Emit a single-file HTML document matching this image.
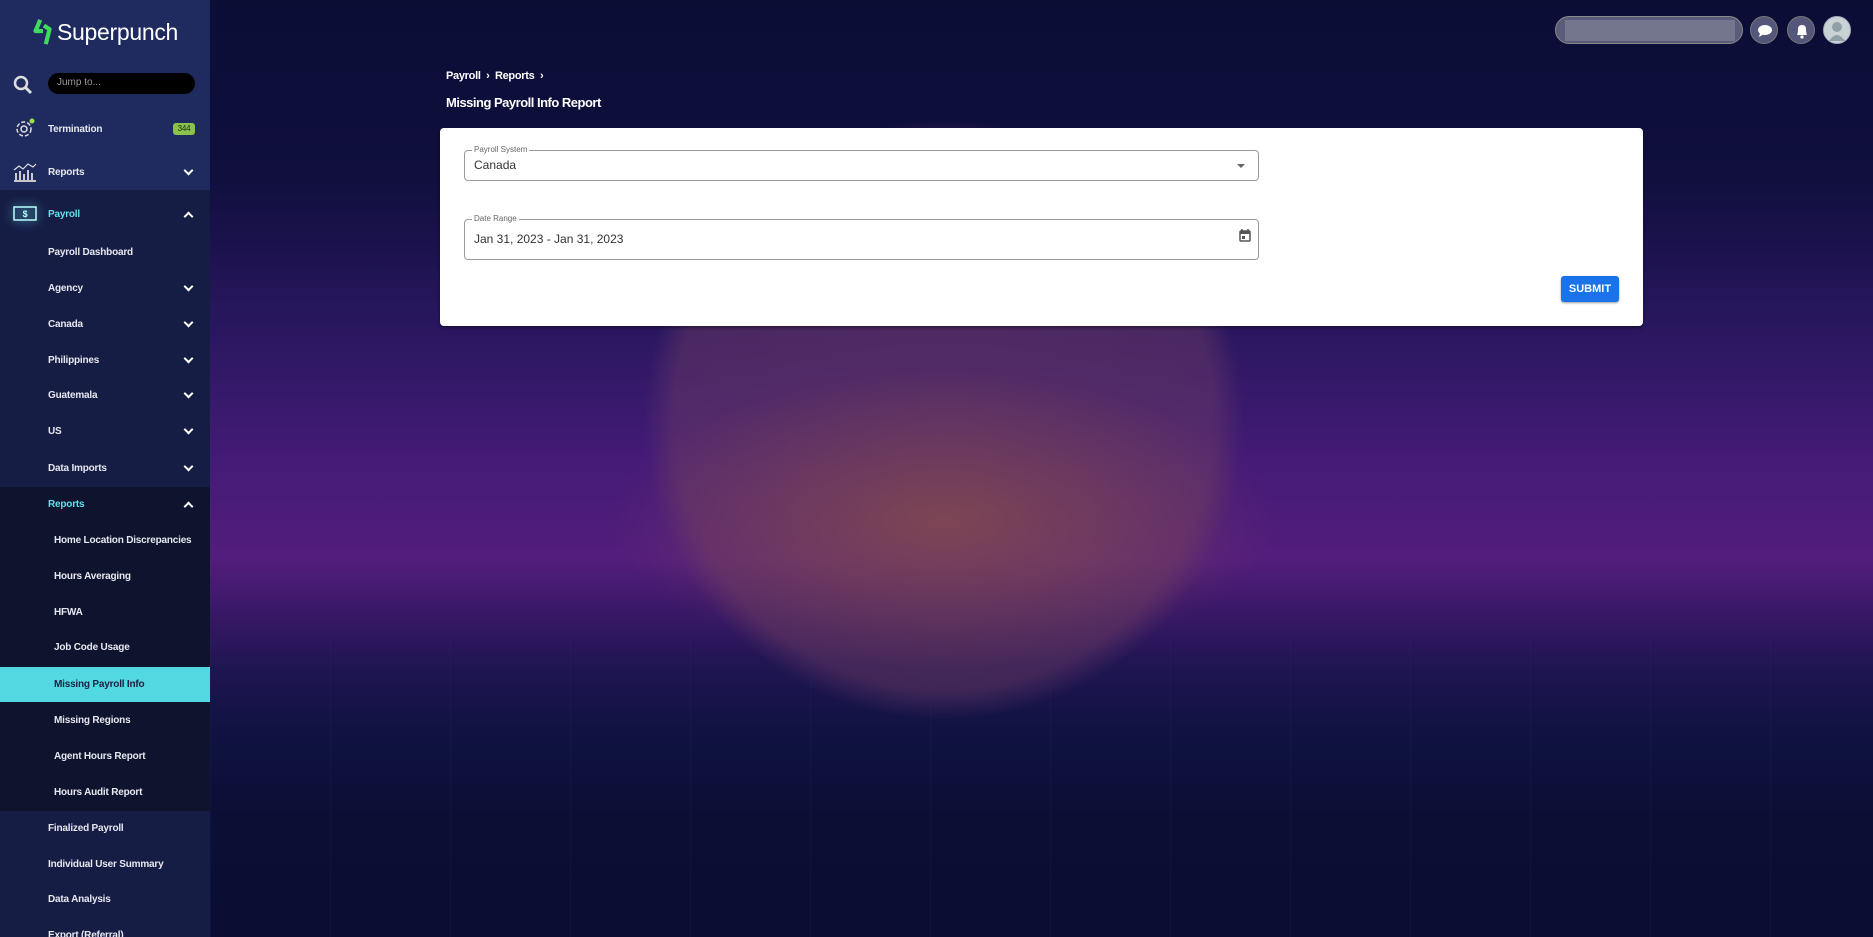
<!DOCTYPE html>
<html><head><meta charset="utf-8"><style>
*{box-sizing:border-box;margin:0;padding:0}
html,body{width:1873px;height:937px;overflow:hidden}
body{font-family:"Liberation Sans",sans-serif;background:#0b0e33;position:relative}
#bg{position:absolute;left:210px;top:0;width:1663px;height:937px;
background:
radial-gradient(ellipse 330px 150px at 734px 520px, rgba(150,90,60,.55), rgba(150,90,60,0) 100%),
radial-gradient(circle 300px at 734px 420px, rgba(110,60,100,.55) 0, rgba(110,60,100,.45) 90%, rgba(110,60,100,0) 100%),
linear-gradient(180deg,#0b0d35 0,#100f3e 180px,#2a1760 330px,#461b78 470px,#531d7c 560px,#3a1868 610px,#1e1550 670px,#0f1240 740px,#0b0f34 820px,#0b0e32 937px);}
#grid{position:absolute;left:210px;top:640px;width:1663px;height:297px;
background:repeating-linear-gradient(90deg,rgba(40,60,120,.12) 0 1px,transparent 1px 120px);}
#side{position:absolute;left:0;top:0;width:210px;height:937px;background:#1f2b5e;color:#e6e8f0;overflow:hidden}
.logo{position:absolute;left:32px;top:18px;font-size:23px;color:#fff;display:flex;align-items:center;gap:3px;letter-spacing:-.3px}
.search{position:absolute;left:48px;top:73px;width:147px;height:21px;background:#000;border-radius:11px;color:#999;font-size:10px;padding:4px 9px}
.row{position:absolute;left:0;width:210px;height:36px;display:flex;align-items:center;font-size:10px;font-weight:bold;white-space:nowrap;letter-spacing:-.2px}
.row span{position:absolute;left:48px}
.row.s span{left:54px}
.chev{position:absolute;right:18px;top:13px;width:7px;height:7px;border-right:2px solid #fff;border-bottom:2px solid #fff;transform:rotate(45deg)}
.chev.up{transform:rotate(-135deg);top:17px}
.icon{position:absolute;left:13px}
.crumb{position:absolute;left:446px;top:70px;color:#fff;font-size:11px;font-weight:bold;letter-spacing:-.3px}
.title{position:absolute;left:446px;top:95px;color:#fff;font-size:13px;font-weight:bold;letter-spacing:-.5px}
.card{position:absolute;left:440px;top:128px;width:1203px;height:198px;background:#fff;border-radius:4px;box-shadow:0 2px 3px rgba(0,0,0,.4)}
.fld{position:absolute;left:24px;width:795px;border:1px solid #9a9a9a;border-radius:4px}
.fld .lb{position:absolute;left:7px;top:-6px;background:#fff;padding:0 2px;font-size:8px;color:#666}
.fld .v{position:absolute;left:9px;font-size:12px;color:#333}
.btn{position:absolute;left:1121px;top:148px;width:58px;height:26px;background:#1a73e8;color:#fff;font-size:11px;font-weight:bold;border-radius:3px;text-align:center;line-height:26px;box-shadow:0 1px 2px rgba(0,0,0,.4)}
.circ{position:absolute;top:16px;width:28px;height:28px;border-radius:50%;background:#55577a;border:1px solid #777}
</style></head><body>
<div id="bg"></div><div id="grid"></div>
<div id="side">
 <div class="logo"><svg width="22" height="28" viewBox="0 0 22 30"><path d="M8 2 L3 14 L11 14 M12 8 L18 12 L14 28" stroke="#3ddc5c" stroke-width="4.5" fill="none" stroke-linejoin="round"/></svg><span>Superpunch</span></div>
 <svg style="position:absolute;left:13px;top:75px" width="20" height="20" viewBox="0 0 20 20"><circle cx="8" cy="8" r="6" stroke="#ddd" stroke-width="2.5" fill="none"/><path d="M12.5 12.5 L18 18" stroke="#ddd" stroke-width="3"/></svg>
 <div class="search">Jump to...</div>
 <div class="row" style="top:111px"><svg class="icon" width="22" height="22" viewBox="0 0 22 22"><circle cx="11" cy="11" r="7" stroke="#ddd" stroke-width="1.5" fill="none" stroke-dasharray="4 2"/><circle cx="11" cy="11" r="3" stroke="#ddd" stroke-width="1.5" fill="none"/><circle cx="19" cy="3" r="2.5" fill="#9be24a"/></svg><span>Termination</span><div style="position:absolute;left:173px;top:12px;width:22px;height:12px;background:#8bc34a;border-radius:3px;color:#1a2a10;font-size:8px;text-align:center;line-height:12px;font-weight:normal">344</div></div>
 <div class="row" style="top:154px"><svg class="icon" width="24" height="20" viewBox="0 0 24 20"><path d="M1 8 L6 4 L10 7 L15 2 L20 5 L23 2" stroke="#ddd" stroke-width="1.2" fill="none"/><path d="M3 18 V11 M7 18 V9 M11 18 V12 M15 18 V8 M19 18 V11 M1 19 H23" stroke="#ddd" stroke-width="1.8"/></svg><span>Reports</span><div class="chev"></div></div>
 <div style="position:absolute;top:190px;left:0;width:210px;height:297px;background:#161d45"></div>
 <div style="position:absolute;top:487px;left:0;width:210px;height:324px;background:#0f142e"></div>
 <div style="position:absolute;top:811px;left:0;width:210px;height:126px;background:#161d45"></div>
 <div style="position:absolute;top:667px;left:0;width:210px;height:35px;background:#52d8e0"></div>
 <div class="row" style="top:196px;color:#5fe0ea"><svg class="icon" width="24" height="18" viewBox="0 0 24 18" style="filter:drop-shadow(0 0 5px #5fe0ea)"><rect x="1" y="2" width="22" height="13" stroke="#bff" stroke-width="1.5" fill="none"/><text x="12" y="12" font-size="9" fill="#bff" text-anchor="middle" font-family="Liberation Sans" font-weight="bold">$</text></svg><span>Payroll</span><div class="chev up"></div></div>
 <div class="row" style="top:234px"><span>Payroll Dashboard</span></div>
 <div class="row" style="top:270px"><span>Agency</span><div class="chev"></div></div>
 <div class="row" style="top:306px"><span>Canada</span><div class="chev"></div></div>
 <div class="row" style="top:342px"><span>Philippines</span><div class="chev"></div></div>
 <div class="row" style="top:377px"><span>Guatemala</span><div class="chev"></div></div>
 <div class="row" style="top:413px"><span>US</span><div class="chev"></div></div>
 <div class="row" style="top:450px"><span>Data Imports</span><div class="chev"></div></div>
 <div class="row" style="top:486px;color:#5fe0ea"><span>Reports</span><div class="chev up"></div></div>
 <div class="row s" style="top:522px"><span>Home Location Discrepancies</span></div>
 <div class="row s" style="top:558px"><span>Hours Averaging</span></div>
 <div class="row s" style="top:594px"><span>HFWA</span></div>
 <div class="row s" style="top:629px"><span>Job Code Usage</span></div>
 <div class="row s" style="top:666px;color:#1a2040"><span>Missing Payroll Info</span></div>
 <div class="row s" style="top:702px"><span>Missing Regions</span></div>
 <div class="row s" style="top:738px"><span>Agent Hours Report</span></div>
 <div class="row s" style="top:774px"><span>Hours Audit Report</span></div>
 <div class="row" style="top:810px"><span>Finalized Payroll</span></div>
 <div class="row" style="top:846px"><span>Individual User Summary</span></div>
 <div class="row" style="top:881px"><span>Data Analysis</span></div>
 <div class="row" style="top:917px"><span>Export (Referral)</span></div>
</div>
<div class="crumb">Payroll &nbsp;›&nbsp; Reports &nbsp;›</div>
<div class="title">Missing Payroll Info Report</div>
<div class="card">
 <div class="fld" style="top:22px;height:31px"><div class="lb">Payroll System</div><div class="v" style="top:7px">Canada</div><div style="position:absolute;right:13px;top:13px;border-left:4px solid transparent;border-right:4px solid transparent;border-top:4px solid #666"></div></div>
 <div class="fld" style="top:91px;height:41px"><div class="lb">Date Range</div><div class="v" style="top:12px">Jan 31, 2023 - Jan 31, 2023</div><svg style="position:absolute;right:7px;top:9px" width="12" height="13" viewBox="0 0 12 13"><rect x="1" y="2" width="10" height="10" rx="1" fill="none" stroke="#555" stroke-width="1.5"/><rect x="1" y="2" width="10" height="3" fill="#555"/><rect x="3" y="7" width="3" height="3" fill="#555"/><path d="M3 0V3M9 0V3" stroke="#555" stroke-width="1.5"/></svg></div>
 <div class="btn">SUBMIT</div>
</div>
<div style="position:absolute;left:1555px;top:16px;width:188px;height:28px;border-radius:14px;background:#5a5b78;border:1px solid #888"><div style="position:absolute;left:9px;top:3px;width:170px;height:21px;background:#74768e"></div></div>
<div class="circ" style="left:1750px"><svg width="28" height="28" viewBox="0 0 28 28"><ellipse cx="14" cy="13" rx="7" ry="5" fill="#fff"/><path d="M9 16 L8 20 L13 17Z" fill="#fff"/></svg></div>
<div class="circ" style="left:1787px"><svg width="28" height="28" viewBox="0 0 28 28"><path d="M9 18 Q10 16 10 12 Q10 8 14 8 Q18 8 18 12 Q18 16 19 18Z" fill="#fff"/><circle cx="14" cy="20" r="1.6" fill="#fff"/></svg></div>
<div class="circ" style="left:1823px;background:#c9d3d6;border-color:#aab"><svg width="26" height="26" viewBox="0 0 26 26"><circle cx="13" cy="10" r="5" fill="#8fa0a6"/><path d="M5 24 Q13 12 21 24Z" fill="#8fa0a6"/></svg></div>
</body></html>
